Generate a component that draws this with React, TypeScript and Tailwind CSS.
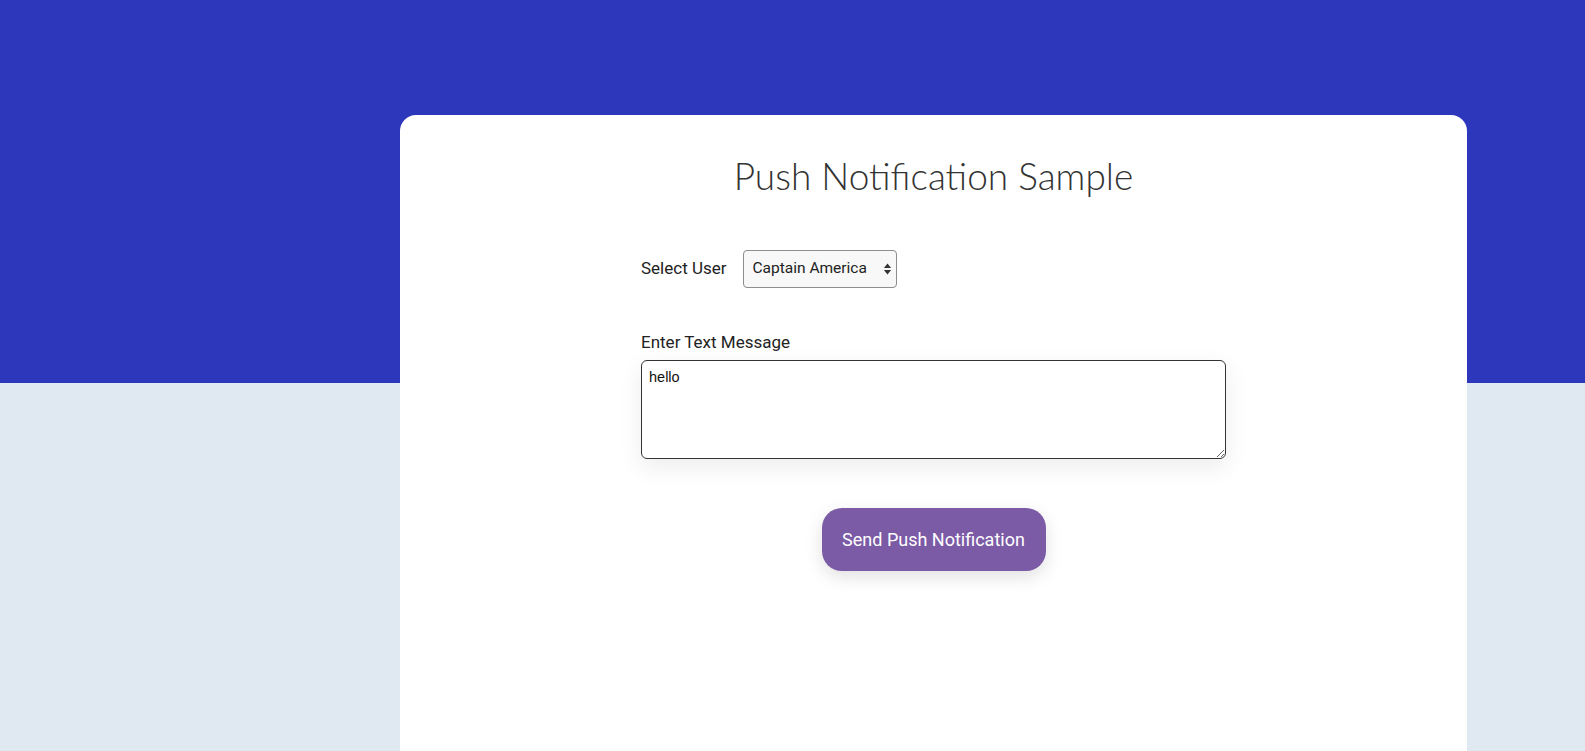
import React from "react";

export default function App() {
  return (
    <div className="h-[751px] w-full overflow-hidden bg-[linear-gradient(to_bottom,#2d37bc_0px,#2d37bc_383px,#e0e8f2_383px)]">
      <div className="ml-[400px] mt-[115px] w-[1067px] h-[700px] rounded-t-[16px] bg-white pt-[37px]">
        <h1 className="text-center text-[37px] leading-[48px] font-light text-[#333] font-['Lato',sans-serif]">
          Push Notification Sample
        </h1>
        <div className="mx-auto mt-[50px] w-[585px] font-['Roboto',sans-serif]">
          <div className="flex items-center">
            <span className="text-[17px] text-[#222]">Select User</span>
            <div className="relative ml-[16px]">
              <select
                defaultValue="Captain America"
                className="h-[38px] w-[154px] appearance-none rounded-[4px] border border-[#8d8d8d] bg-[#f8f8f8] pl-[9px] pr-[24px] text-[15.5px] text-[#222] font-['Roboto',sans-serif] outline-none"
              >
                <option>Captain America</option>
                <option>Iron Man</option>
                <option>Thor</option>
              </select>
              <svg className="pointer-events-none absolute right-[5px] top-[12px]" width="9" height="14" viewBox="0 0 10 14">
                <path d="M5 1 L9 6 L1 6 Z" fill="#333" />
                <path d="M5 13 L9 8 L1 8 Z" fill="#333" />
              </svg>
            </div>
          </div>
          <div className="mt-[42px] text-[17px] text-[#222] leading-[24px]">Enter Text Message</div>
          <textarea
            defaultValue="hello"
            className="mt-[6px] block h-[99px] w-[585px] rounded-[6px] border border-[#333] px-[7px] py-[6px] text-[14.5px] text-[#111] font-['Liberation_Sans',Arial,sans-serif] outline-none shadow-[0_8px_24px_rgba(0,0,0,0.08)]"
          />
          <div className="mt-[49px] flex justify-center">
            <button className="h-[63px] w-[224px] rounded-[20px] bg-[#7b5aa6] text-[18px] text-white font-['Roboto',sans-serif] shadow-[0_6px_18px_rgba(0,0,0,0.12)]">
              Send Push Notification
            </button>
          </div>
        </div>
      </div>
    </div>
  );
}
